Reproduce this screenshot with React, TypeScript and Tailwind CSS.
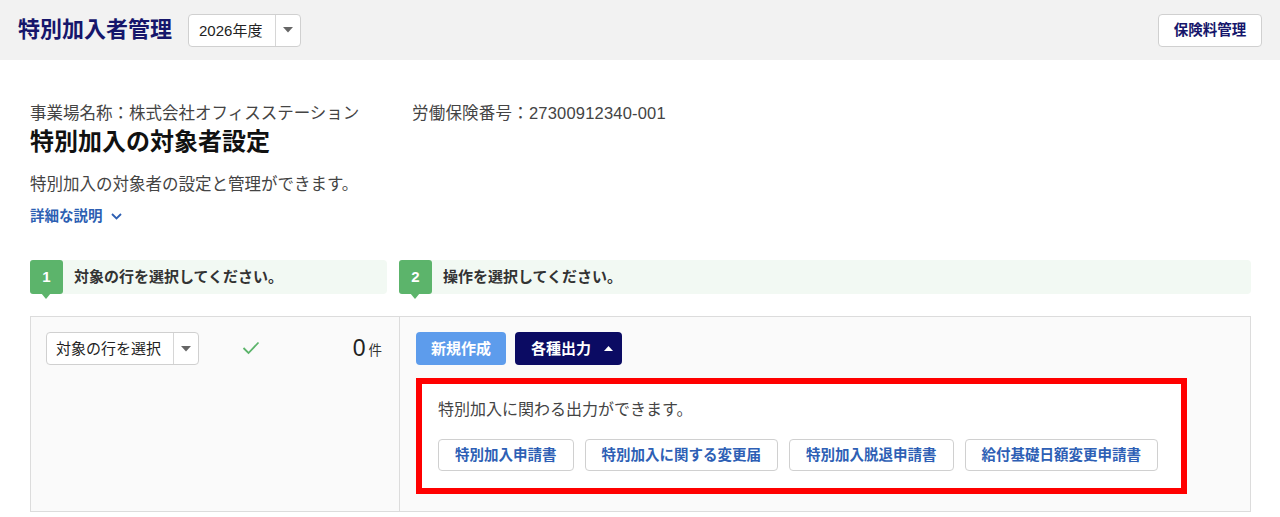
import React from "react";

const FONT = '"Liberation Sans", "Noto Sans CJK JP", sans-serif';

function Caret({ className = "" }: { className?: string }) {
  return (
    <svg width="10" height="6" viewBox="0 0 10 6" className={className}>
      <path d="M0 0 L10 0 L5 5.5 Z" fill="currentColor" />
    </svg>
  );
}

function StepLabel({ num, text, className }: { num: string; text: string; className: string }) {
  return (
    <div className={`relative flex h-[34px] items-center rounded-[4px] bg-[#f2f9f3] ${className}`}>
      <div className="relative flex h-[34px] w-[33px] shrink-0 items-center justify-center rounded-[3px] bg-[#5cb46b] text-[15px] font-bold text-white">
        {num}
        <span className="absolute left-[11px] top-[33px] h-0 w-0 border-l-[5px] border-r-[5px] border-t-[6px] border-l-transparent border-r-transparent border-t-[#5cb46b]" />
      </div>
      <span className="ml-[11px] text-[15px] font-bold leading-[20px] text-[#333]">{text}</span>
    </div>
  );
}

const outputs = ["特別加入申請書", "特別加入に関する変更届", "特別加入脱退申請書", "給付基礎日額変更申請書"];

export default function App() {
  return (
    <div className="min-h-[517px] bg-white text-[#333]" style={{ fontFamily: FONT }}>
      {/* top bar */}
      <header className="flex h-[60px] items-center bg-[#f2f2f2] pl-[18px] pr-[18px]">
        <h1 className="text-[22px] font-bold leading-none text-[#16166b]">特別加入者管理</h1>
        <div className="ml-[16px] flex h-[33px] w-[113px] items-center rounded-[4px] border border-[#d0d0d0] bg-white">
          <span className="flex-1 pl-[10px] text-[15px] leading-none text-[#222]">2026年度</span>
          <span className="flex h-full w-[25px] items-center justify-center border-l border-[#d6d6d6] text-[#666]">
            <Caret />
          </span>
        </div>
        <button className="ml-auto h-[33px] w-[104px] rounded-[4px] border border-[#d0d0d0] bg-white text-[14.5px] font-bold leading-none text-[#16166b]">
          保険料管理
        </button>
      </header>

      <main className="pl-[30px] pr-[29px] pt-[41px]">
        <div className="flex text-[16.5px] leading-[24px] text-[#444]">
          <span className="w-[382px]">事業場名称：株式会社オフィスステーション</span>
          <span className="tracking-[0.2px]">労働保険番号：27300912340-001</span>
        </div>
        <h2 className="mt-[1px] text-[24px] font-bold leading-[32px] text-[#111]">特別加入の対象者設定</h2>
        <p className="mt-[14px] text-[16.5px] leading-[24px] text-[#444]">特別加入の対象者の設定と管理ができます。</p>
        <div className="mt-[9px] flex items-center gap-[8px] text-[14.5px] font-bold leading-[22px] text-[#2d5fb3]">
          <span>詳細な説明</span>
          <svg width="11" height="7" viewBox="0 0 11 7">
            <path d="M1 1 L5.5 5.5 L10 1" fill="none" stroke="#2d5fb3" strokeWidth="1.8" />
          </svg>
        </div>

        {/* steps */}
        <div className="mt-[33px] flex gap-[12px]">
          <StepLabel num="1" text="対象の行を選択してください。" className="w-[357px] shrink-0" />
          <StepLabel num="2" text="操作を選択してください。" className="flex-1" />
        </div>

        {/* work panel */}
        <section className="mt-[22px] flex h-[196px] border border-[#dcdcdc] bg-[#fafafa]">
          <div className="flex w-[369px] shrink-0 items-start border-r border-[#dcdcdc] pl-[15px] pr-[17px] pt-[15px]">
            <div className="flex h-[33px] w-[153px] items-center rounded-[4px] border border-[#d0d0d0] bg-white">
              <span className="flex-1 pl-[9px] text-[15px] leading-none text-[#222]">対象の行を選択</span>
              <span className="flex h-full w-[25px] items-center justify-center border-l border-[#d6d6d6] text-[#666]">
                <Caret />
              </span>
            </div>
            <svg width="18" height="14" viewBox="0 0 18 14" className="ml-[43px] mt-[9px]">
              <path d="M1.5 7 L6.5 12 L16.5 1.5" fill="none" stroke="#5cb46b" strokeWidth="1.8" />
            </svg>
            <div className="ml-auto flex h-[33px] items-center gap-[3px]">
              <span className="text-[23px] leading-none text-[#222]">0</span>
              <span className="mt-[4px] text-[13.5px] leading-none text-[#333]">件</span>
            </div>
          </div>

          <div className="flex-1 pl-[16px] pt-[15px]">
            <div className="flex gap-[9px]">
              <button className="h-[33px] w-[90px] rounded-[4px] bg-[#5d9cec] text-[15px] font-bold leading-none text-white">
                新規作成
              </button>
              <button className="flex h-[33px] w-[107px] items-center rounded-[4px] bg-[#0b0b63] pl-[16px] text-[15px] font-bold leading-none text-white">
                各種出力
                <svg width="9" height="5" viewBox="0 0 9 5" className="ml-[13px]">
                  <path d="M0 5 L4.5 0 L9 5 Z" fill="#fff" />
                </svg>
              </button>
            </div>

            <div className="mt-[13px] w-[771px] border-[6px] border-[#ff0000] bg-white px-[16px] pb-[17px] pt-[14px]">
              <p className="text-[16px] leading-[24px] text-[#444]">特別加入に関わる出力ができます。</p>
              <div className="mt-[17px] flex gap-[11px]">
                {outputs.map((label) => (
                  <button
                    key={label}
                    className="h-[32px] rounded-[4px] border border-[#d0d0d0] bg-white px-[16px] text-[14.5px] font-bold leading-none text-[#2e5fb5]"
                  >
                    {label}
                  </button>
                ))}
              </div>
            </div>
          </div>
        </section>
      </main>
    </div>
  );
}
